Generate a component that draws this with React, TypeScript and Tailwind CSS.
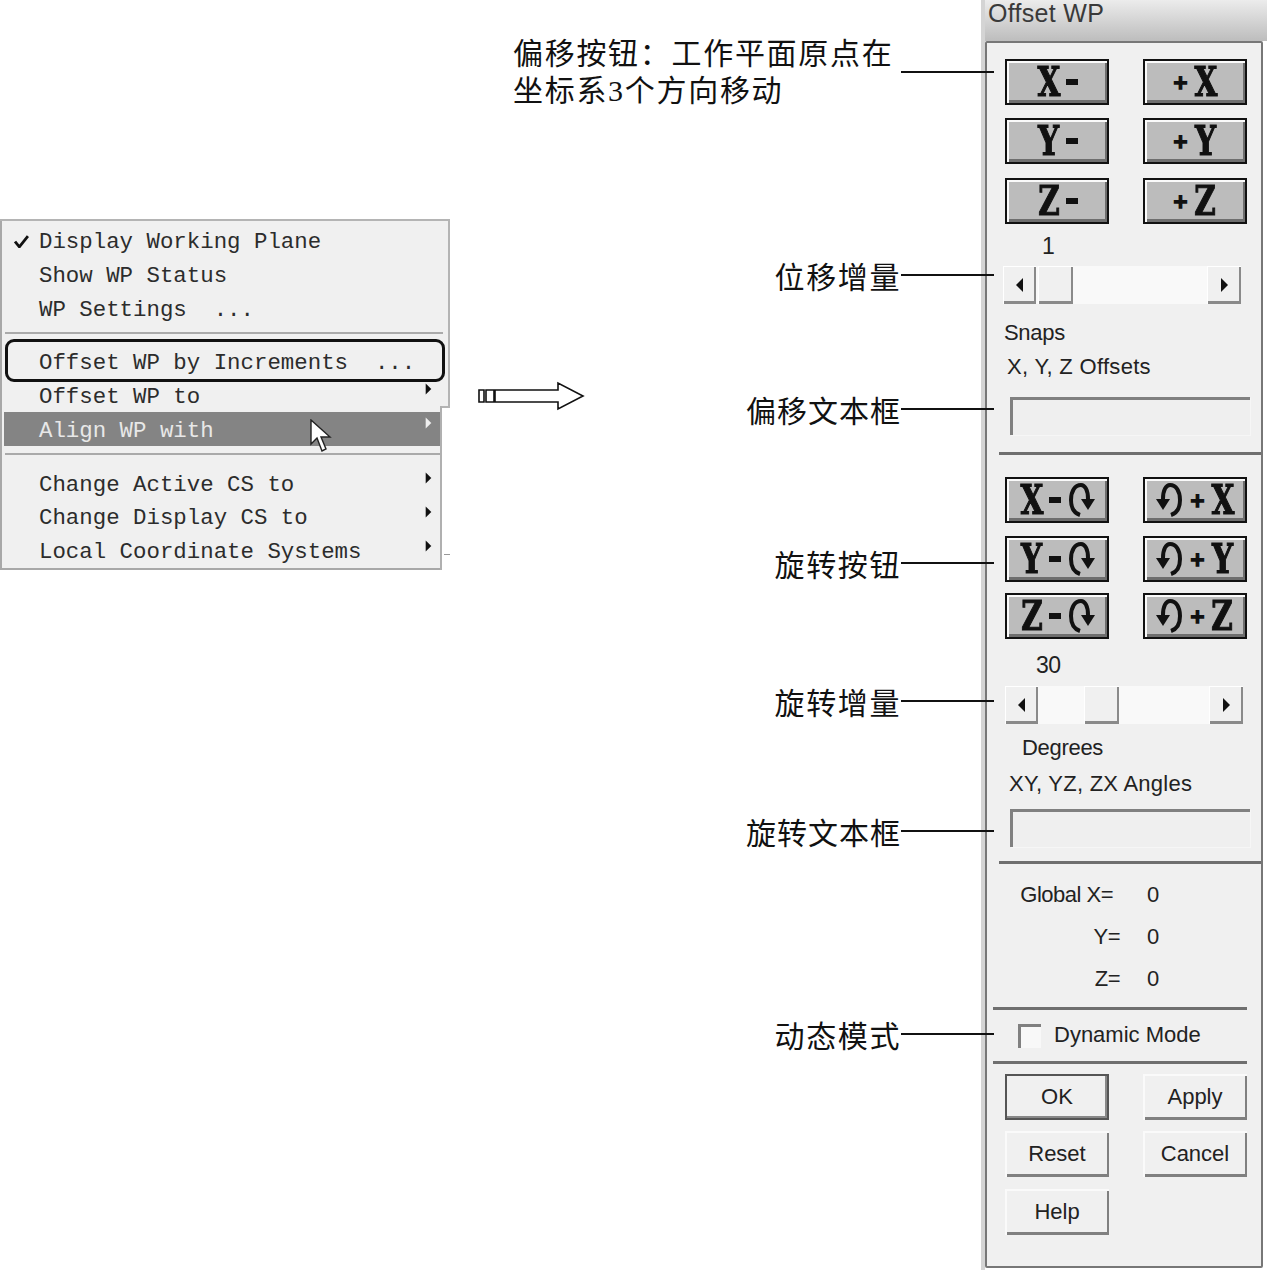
import React from "react";

const sans = "font-['Liberation_Sans',sans-serif]";
const mono = "font-['Liberation_Mono',monospace]";

function Tri({ dir, className }: { dir: "l" | "r"; className: string }) {
  return (
    <svg viewBox="0 0 10 16" className={className}>
      <path d={dir === "r" ? "M1 0L9 8L1 16Z" : "M9 0L1 8L9 16Z"} fill="#111" />
    </svg>
  );
}

function Row({ label, arrow, active, nudge = "pt-[2px]" }: { label: string; arrow?: boolean; active?: boolean; nudge?: string }) {
  return (
    <div className={`h-[34px] flex items-center justify-between ${active ? "bg-[#848484] text-[#e8e8e8] ml-[2px] mr-[2px] pl-[35px] pr-[8px]" : "text-[#2c2c2c] pl-[37px] pr-[10px]"}`}>
      <span className={`whitespace-pre text-[22.4px] leading-none ${nudge}`}>{label}</span>
      {arrow && <Tri dir="r" className={`w-[7px] h-[12px] mb-[12px] ${active ? "invert" : ""}`} />}
    </div>
  );
}

function Menu() {
  return (
    <div className={`relative w-[450px] h-[351px] mt-[219px] shrink-0 ${mono}`}>
      <div className="absolute left-0 top-0 w-[450px] h-[189px] bg-[#f0f0f0] border-2 border-[#b4b4b4]" />
      <div className="relative w-[442px] h-[349px] mt-[2px] bg-[linear-gradient(#f0f0f0,#f0f0f0)] border-2 border-t-0 border-r-0 border-[#a8a8a8] pt-[3px]">
        <Row label="Display Working Plane" />
        <Row label="Show WP Status" />
        <Row label="WP Settings  ..." />
        <div className="h-[2px] bg-[#aaa] ml-[3px] mt-[6px] mb-[10px] mr-[-1px]" />
        <Row label="Offset WP by Increments  ..." nudge="pt-[4px]" />
        <Row label="Offset WP to" arrow nudge="pt-[4px]" />
        <Row label="Align WP with" arrow active nudge="pt-[4px]" />
        <div className="h-[2px] bg-[#aaa] ml-[3px] mr-[2px] mt-[7px] mb-[12px]" />
        <Row label="Change Active CS to" arrow />
        <Row label="Change Display CS to" arrow nudge="pt-[0px]" />
        <Row label="Local Coordinate Systems" arrow nudge="pt-[0px]" />
      </div>
      <div className="absolute left-[440px] top-[187px] bottom-0 w-[2px] bg-[#b0b0b0]" />
      <div className="absolute left-[442px] top-[189px] bottom-0 w-[8px] bg-white" />
      <div className="absolute left-[444px] top-[335px] w-[6px] h-[1px] bg-[#999]" />
      <svg viewBox="0 0 14 12" className="absolute left-[14px] top-[16px] w-[15px] h-[13px]">
        <path d="M1 6L5 11L13 1" fill="none" stroke="#111" strokeWidth="2.6" />
      </svg>
      <div className="absolute left-[5px] top-[120px] w-[440px] h-[43px] border-[3px] border-[#111] rounded-[9px]" />
      <svg viewBox="0 0 22 34" className="absolute left-[310px] top-[200px] w-[22px] h-[34px]">
        <path d="M1 1V25L7 19L12 32L16 30L11 18L20 18Z" fill="#fff" stroke="#222" strokeWidth="1.4" />
      </svg>
    </div>
  );
}

function BigArrow() {
  return (
    <svg viewBox="0 0 108 30" className="w-[108px] h-[30px] ml-[27px] mt-[381px] shrink-0">
      <path d="M2 9H7V21H2ZM9 9H17V21H9ZM18 9H81V2L106 15L81 28V21H18Z" fill="#fff" stroke="#111" strokeWidth="1.6" />
    </svg>
  );
}

function Rot({ flip }: { flip?: boolean }) {
  return (
    <svg viewBox="0 0 26 34" className={`w-[26px] h-[34px] ${flip ? "-scale-x-100" : ""}`}>
      <path d="M11 32C5 30 2 24 2 17C2 8 6 2 12 2C16 2 19 7 19 16" fill="none" stroke="#111" strokeWidth="4" />
      <path d="M12 16H26L19 27Z" fill="#111" />
    </svg>
  );
}

function Axis({ t }: { t: string }) {
  const letter = t.replace(/[-+]/g, "");
  const minus = t.includes("-");
  return (
    <span className="flex items-center gap-[5px] text-[#111]">
      {!minus && <span className="font-['DejaVu_Sans',sans-serif] font-bold text-[19px] leading-none [-webkit-text-stroke:1.5px_#111]">+</span>}
      <span className="w-[24px] flex justify-center font-['DejaVu_Serif',serif] font-bold text-[41px] leading-none [-webkit-text-stroke:1.2px_#111]">
        <span className="inline-block scale-x-[0.72]">{letter}</span>
      </span>
      {minus && <span className="w-[12px] h-[6px] bg-[#111]" />}
    </span>
  );
}

function DarkBtn({ t, rot }: { t: string; rot?: boolean }) {
  const minus = t.includes("-");
  return (
    <div className="w-[104px] h-[46px] bg-[#bcbcbc] border-2 border-[#111] shadow-[inset_2px_2px_0_#fafafa,inset_-2px_-3px_0_#6e6e6e] flex items-center justify-center gap-[8px]">
      {rot && !minus && <Rot flip />}
      <Axis t={t} />
      {rot && minus && <Rot />}
    </div>
  );
}

function LightBtn({ t, ok }: { t: string; ok?: boolean }) {
  return (
    <div className={`w-[104px] h-[46px] bg-[#f0f0f0] flex items-center justify-center text-[#222] ${ok ? "border-2 border-[#555] shadow-[inset_-2px_-2px_0_#888]" : "shadow-[inset_2px_2px_0_#fafafa,inset_-2px_-3px_0_#808080]"} ${sans} text-[22px] leading-none`}>
      {t}
    </div>
  );
}

function BtnRow({ a, b, rot, className }: { a: string; b: string; rot?: boolean; className: string }) {
  return (
    <div className={`flex justify-between w-[242px] ml-[18px] ${className}`}>
      <DarkBtn t={a} rot={rot} />
      <DarkBtn t={b} rot={rot} />
    </div>
  );
}

function ScrollBar({ thumb, className }: { thumb: string; className: string }) {
  const cell = "h-[38px] bg-[#f0f0f0] shadow-[inset_1px_1px_0_#fff,inset_-2px_-3px_0_#8a8a8a] flex items-center justify-center shrink-0";
  return (
    <div className={`flex w-[238px] bg-[#f9f9f9] justify-between ${className}`}>
      <div className="flex">
        <div className={`w-[33px] ${cell}`}><Tri dir="l" className="w-[9px] h-[14px]" /></div>
        <div className={`w-[35px] ${cell} ${thumb}`} />
      </div>
      <div className={`w-[34px] ${cell}`}><Tri dir="r" className="w-[9px] h-[14px]" /></div>
    </div>
  );
}

function TextBox({ className }: { className: string }) {
  return <div className={`w-[240px] h-[38px] ml-[23px] bg-[#efefef] border-t-[3px] border-l-[3px] border-[#808080] shadow-[1px_1px_0_#f6f6f6] ${className}`} />;
}

function Rule({ className }: { className: string }) {
  return <div className={`h-[3px] bg-[#6f6f6f] ${className}`} />;
}

function Dialog() {
  return (
    <div className={`w-[286px] h-[1270px] shrink-0 flex flex-col bg-gradient-to-b from-[#ececec] to-[#bdbdbd] bg-[length:100%_41px] bg-no-repeat border-l-[4px] border-[#d4d4d4] text-[#222] ${sans}`}>
      <div className="h-[41px] shrink-0 pl-[3px] text-[25px] leading-[26px] tracking-[0.3px] text-[#3a3a3a]">Offset WP</div>
      <div className="relative flex-1 mb-[2px] mr-[4px] flex flex-col border-2 border-[#777] rounded-[2px] bg-[#f0f0f0] overflow-hidden">
        <BtnRow a="X-" b="+X" className="mt-[16px]" />
        <BtnRow a="Y-" b="+Y" className="mt-[13px]" />
        <BtnRow a="Z-" b="+Z" className="mt-[14px]" />
        <div className="ml-[55px] mt-[9px] text-[23px] leading-[26px]">1</div>
        <ScrollBar thumb="ml-[2px]" className="ml-[16px] mt-[7px]" />
        <div className="ml-[17px] mt-[16px] text-[22px] leading-[26px] tracking-[-0.3px]">Snaps</div>
        <div className="ml-[20px] mt-[8px] text-[22px] leading-[26px] tracking-[0.3px]">X, Y, Z Offsets</div>
        <TextBox className="mt-[17px]" />
        <Rule className="ml-[12px] mt-[17px]" />
        <BtnRow a="X-" b="+X" rot className="mt-[22px]" />
        <BtnRow a="Y-" b="+Y" rot className="mt-[13px]" />
        <BtnRow a="Z-" b="+Z" rot className="mt-[11px]" />
        <div className="ml-[49px] mt-[13px] text-[23px] leading-[26px] tracking-[-0.5px]">30</div>
        <ScrollBar thumb="ml-[46px]" className="ml-[18px] mt-[8px]" />
        <div className="ml-[35px] mt-[11px] text-[22px] leading-[26px] tracking-[-0.3px]">Degrees</div>
        <div className="ml-[22px] mt-[10px] text-[22px] leading-[26px] tracking-[0.25px] whitespace-pre">XY, YZ, ZX Angles</div>
        <TextBox className="mt-[12px]" />
        <Rule className="ml-[12px] mt-[14px]" />
        <div className="h-[143px] text-[22px] leading-[26px] tracking-[-0.5px]">
          <div className="grid grid-cols-[154px_auto] justify-start ml-[6px] pt-[18px] gap-y-[16px]">
            <div className="text-right pr-[34px] whitespace-pre">Global X=</div><div>0</div>
            <div className="text-right pr-[27px]">Y=</div><div>0</div>
            <div className="text-right pr-[27px]">Z=</div><div>0</div>
          </div>
        </div>
        <Rule className="ml-[6px] mr-[14px]" />
        <div className="h-[51px] flex items-center ml-[31px] gap-[13px]">
          <div className="w-[23px] h-[24px] bg-[#f8f8f8] border-t-[3px] border-l-[3px] border-[#808080]" />
          <span className="text-[22px] leading-[26px] pb-[2px]">Dynamic Mode</span>
        </div>
        <Rule className="ml-[6px] mr-[14px]" />
        <div className="flex justify-between w-[242px] ml-[18px] mt-[10px]">
          <LightBtn t="OK" ok />
          <LightBtn t="Apply" />
        </div>
        <div className="flex justify-between w-[242px] ml-[18px] mt-[11px]">
          <LightBtn t="Reset" />
          <LightBtn t="Cancel" />
        </div>
        <div className="flex justify-between w-[242px] ml-[18px] mt-[12px]">
          <LightBtn t="Help" />
        </div>
      </div>
    </div>
  );
}

function Callout({ label, className }: { label: string; className: string }) {
  return (
    <div className={`absolute right-[273px] flex items-center h-[40px] ${className}`}>
      <span className={`whitespace-nowrap text-[30px] leading-none text-[#111] pt-[5px] ${label.length === 4 ? "tracking-[1.6px]" : "tracking-[1px]"}`}>{label}</span>
      <div className="w-[93px] h-[2px] bg-[#111]" />
    </div>
  );
}

export default function App() {
  return (
    <div className="relative w-[1267px] h-[1270px] bg-white flex overflow-hidden font-['Liberation_Serif','Noto_Sans_CJK_SC',serif]">
      <Menu />
      <BigArrow />
      <div className="flex-1" />
      <Dialog />
      <div className="absolute left-[513px] top-[35px] text-[30px] leading-[37px] tracking-[1.7px] text-[#111]">
        <div>{"偏移按钮\uFF1A工作平面原点在"}</div>
        <div>坐标系3个方向移动</div>
      </div>
      <div className="absolute left-[901px] top-[71px] w-[93px] h-[2px] bg-[#111]" />
      <Callout label="位移增量" className="top-[255px]" />
      <Callout label="偏移文本框" className="top-[389px]" />
      <Callout label="旋转按钮" className="top-[543px]" />
      <Callout label="旋转增量" className="top-[681px]" />
      <Callout label="旋转文本框" className="top-[811px]" />
      <Callout label="动态模式" className="top-[1014px]" />
    </div>
  );
}
